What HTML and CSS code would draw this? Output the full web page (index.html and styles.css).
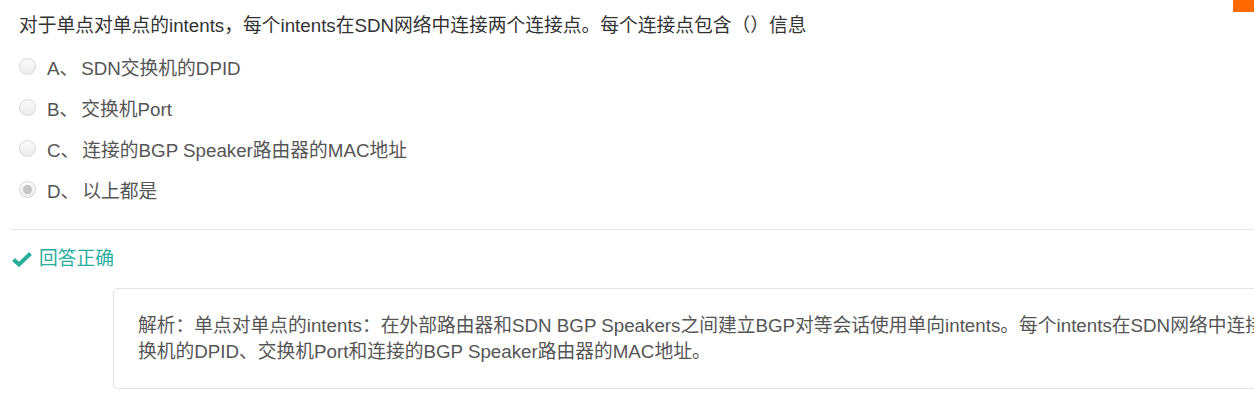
FILE: index.html
```html
<!DOCTYPE html>
<html lang="zh-CN">
<head>
<meta charset="utf-8">
<title>题目</title>
<link rel="stylesheet" href="styles.css">
</head>
<body>
<div class="corner-tab"></div>
<div class="page">
  <div class="question">
    <div class="q-title">对于单点对单点的intents，每个intents在SDN网络中连接两个连接点。每个连接点包含（）信息</div>
    <ul class="options">
      <li class="option"><span class="radio"></span><span class="opt-key">A、</span><span class="opt-text">SDN交换机的DPID</span></li>
      <li class="option"><span class="radio"></span><span class="opt-key">B、</span><span class="opt-text">交换机Port</span></li>
      <li class="option"><span class="radio"></span><span class="opt-key">C、</span><span class="opt-text">连接的BGP Speaker路由器的MAC地址</span></li>
      <li class="option"><span class="radio checked"></span><span class="opt-key">D、</span><span class="opt-text">以上都是</span></li>
    </ul>
  </div>
  <div class="result">
    <div class="status">
      <svg class="check" viewBox="0 0 20 16" width="20" height="16"><path d="M1.5 8.5 L7 13.5 L18.5 2.5" fill="none" stroke="#2aae9c" stroke-width="4"/></svg>
      <span>回答正确</span>
    </div>
    <div class="analysis">
      <p>解析：单点对单点的intents：在外部路由器和SDN BGP Speakers之间建立BGP对等会话使用单向intents。每个intents在SDN网络中连接两个连接点，每个连接点包含SDN交<br>换机的DPID、交换机Port和连接的BGP Speaker路由器的MAC地址。</p>
    </div>
  </div>
</div>
</body>
</html>
```

FILE: styles.css
```css
html, body {
  margin: 0;
  padding: 0;
  overflow: hidden;
  background: #fff;
}
body {
  font-family: "Liberation Sans", Arial, "Noto Sans CJK SC", sans-serif;
  font-size: 18.75px;
  color: #333;
  width: 1254px;
  height: 402px;
  position: relative;
}
.corner-tab {
  position: absolute;
  top: 0;
  right: 0;
  width: 21px;
  height: 12px;
  background: #ff6a00;
}
.page {
  padding: 15px 0 0 0;
}
.question {
  padding-left: 19px;
}
.q-title {
  line-height: 22px;
  color: #333;
}
.options {
  list-style: none;
  margin: 18px 0 0 0;
  padding: 0;
  display: flex;
  flex-direction: column;
  gap: 19px;
}
.option {
  display: flex;
  align-items: center;
  height: 22px;
  color: #555;
}
.opt-key {
  margin-right: 3px;
}
.radio {
  width: 17px;
  height: 17px;
  border: 1px solid #d6d6d6;
  border-radius: 50%;
  box-sizing: border-box;
  background: linear-gradient(#fbfbfb, #ececec);
  margin-right: 11px;
  flex: none;
  display: flex;
  align-items: center;
  justify-content: center;
}
.radio.checked::after {
  content: "";
  width: 9px;
  height: 9px;
  border-radius: 50%;
  background: #c4c4c4;
}
.result {
  margin: 29px 0 0 11px;
  border-top: 1px solid #e6e6e6;
  padding-top: 18px;
}
.status {
  display: flex;
  align-items: center;
  gap: 7px;
  color: #2aae9c;
  font-size: 18.75px;
  line-height: 22px;
  padding-left: 1px;
}
.check {
  flex: none;
}
.analysis {
  margin: 18px 0 0 102px;
  width: 2000px;
  border: 1px solid #e3e3e3;
  border-radius: 5px;
  padding: 24px 24px 23px 24px;
  box-sizing: border-box;
}
.analysis p {
  margin: 0;
  line-height: 26px;
  color: #555;
  white-space: nowrap;
}
```
